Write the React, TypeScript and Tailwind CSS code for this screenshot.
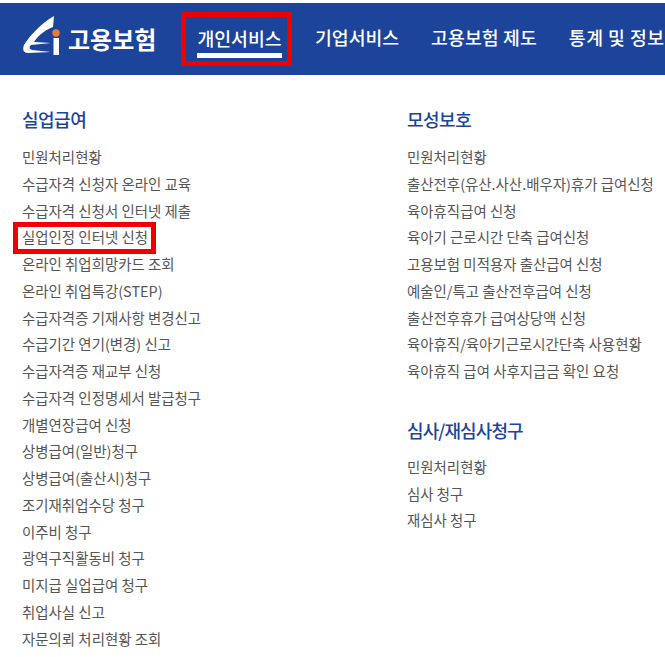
const left = ["민원처리현황","수급자격 신청자 온라인 교육","수급자격 신청서 인터넷 제출","실업인정 인터넷 신청","온라인 취업희망카드 조회","온라인 취업특강(STEP)","수급자격증 기재사항 변경신고","수급기간 연기(변경) 신고","수급자격증 재교부 신청","수급자격 인정명세서 발급청구","개별연장급여 신청","상병급여(일반)청구","상병급여(출산시)청구","조기재취업수당 청구","이주비 청구","광역구직활동비 청구","미지급 실업급여 청구","취업사실 신고","자문의뢰 처리현황 조회"];
const right1 = ["민원처리현황","출산전후(유산.사산.배우자)휴가 급여신청","육아휴직급여 신청","육아기 근로시간 단축 급여신청","고용보험 미적용자 출산급여 신청","예술인/특고 출산전후급여 신청","출산전후휴가 급여상당액 신청","육아휴직/육아기근로시간단축 사용현황","육아휴직 급여 사후지급금 확인 요청"];
const right2 = ["민원처리현황","심사 청구","재심사 청구"];

function Item({ t }: { t: string }) {
  return (
    <li className="relative h-[26.78px] leading-[26.78px] text-[14.45px] text-[#555] whitespace-nowrap">
      {t}
      {t === "실업인정 인터넷 신청" && (
        <span className="absolute left-[-9px] top-[-2px] w-[143px] h-[32px] border-[5px] border-[#f00000]" />
      )}
    </li>
  );
}

export default function App() {
  return (
    <div className="w-[665px] h-[657px] overflow-hidden bg-white pt-[3px] font-['Noto_Sans_CJK_KR','Noto_Sans',sans-serif]">
      <header className="h-[72px] bg-[#1c449b] flex items-center pl-[22px] text-white whitespace-nowrap">
        <div className="flex items-center w-[159px] shrink-0">
          <svg width="38" height="42" viewBox="0 0 38 42" className="mt-[-6px] shrink-0">
            <path d="M32 1 C20 8 8 20 2 30 C0 35 2 38 6 38 L29 37 L10 35 C7 34 7 32 9 30 L29 28 L12 27 C16 20 25 14 31 12 Z" fill="#fff" />
            <circle cx="34" cy="18" r="3.7" fill="#f07a2a" />
            <rect x="31.5" y="23" width="5.5" height="17" fill="#fff" />
          </svg>
          <span className="ml-[8px] text-[24px] font-bold tracking-[0px]">고용보험</span>
        </div>
        <nav className="flex items-center text-[18.3px] font-medium">
          <div className="w-[111px] h-[54px] border-[5px] border-[#f00000] flex justify-center pl-[6px] shrink-0">
            <span className="h-[41px] leading-[42px] border-b-[5px] border-white">개인서비스</span>
          </div>
          <span className="ml-[23px] mt-[-2px]">기업서비스</span>
          <span className="ml-[32px] mt-[-2px] tracking-[0.1px]">고용보험 제도</span>
          <span className="ml-[32px] mt-[-2px] tracking-[0.5px]">통계 및 정보</span>
        </nav>
      </header>
      <main className="flex pt-[30px]">
        <section className="w-[407px] pl-[22px] shrink-0">
          <h2 className="text-[18px] leading-[28px] font-medium text-[#1c449b] tracking-[-0.5px] mb-[11px]">실업급여</h2>
          <ul>{left.map((t) => <Item key={t} t={t} />)}</ul>
        </section>
        <section className="flex-1">
          <h2 className="text-[18px] leading-[28px] font-medium text-[#1c449b] tracking-[-0.5px] mb-[11px]">모성보호</h2>
          <ul>{right1.map((t) => <Item key={t} t={t} />)}</ul>
          <h2 className="mt-[31px] text-[18px] leading-[28px] font-medium text-[#1c449b] tracking-[-0.9px] mb-[10px]">심사/재심사청구</h2>
          <ul>{right2.map((t) => <Item key={t} t={t} />)}</ul>
        </section>
      </main>
    </div>
  );
}
